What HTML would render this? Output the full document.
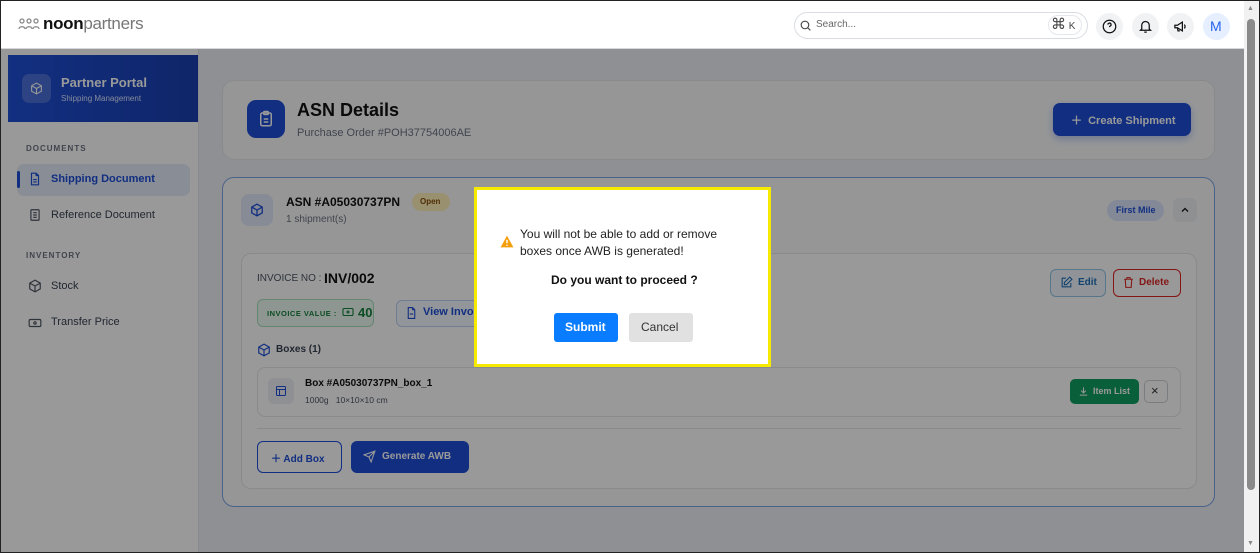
<!DOCTYPE html>
<html><head><style>
*{box-sizing:border-box;margin:0;padding:0}
body{width:1260px;height:553px;overflow:hidden;font-family:"Liberation Sans",sans-serif;background:#fff;position:relative}
.frame{position:absolute;left:0;top:0;width:1260px;height:553px;border:1px solid #222;z-index:50;pointer-events:none}
.hdr{position:absolute;left:1px;top:1px;width:1243px;height:48px;background:#fff;border-bottom:1px solid #d5d7db}
.abs{position:absolute}
.main{position:absolute;left:1px;top:49px;width:1243px;height:503px;background:#eef1f5}
.side{position:absolute;left:1px;top:49px;width:198px;height:503px;background:#fff;border-right:1px solid #e2e5ea}
.ov{position:absolute;left:1px;top:49px;width:1243px;height:503px;background:rgba(0,0,0,0.4)}
.card{position:absolute;background:#fafbfc;border:1px solid #e3e6ea;border-radius:12px}
.t{position:absolute;white-space:nowrap}
.scroll{position:absolute;left:1244px;top:1px;width:15px;height:551px;background:#f1f1f1}
svg{position:absolute}
</style></head><body>
<div class="main"></div>
<div class="side">
 <div class="abs" style="left:7px;top:6px;width:190px;height:67px;background:linear-gradient(90deg,#1e4fd6,#1b3fb0)"></div>
 <div class="abs" style="left:21px;top:25px;width:29px;height:29px;border-radius:7px;background:rgba(255,255,255,.2)"></div>
 <svg style="left:29px;top:33px" width="13" height="13" viewBox="0 0 24 24" fill="none" stroke="#fff" stroke-width="2"><path d="M12 2l9 5v10l-9 5-9-5V7z M3 7l9 5 9-5 M12 12v10"/></svg>
 <div class="t" style="left:60px;top:26px;color:#fff;font-weight:bold;font-size:13px">Partner Portal</div>
 <div class="t" style="left:60px;top:45px;color:#dbe4ff;font-size:8px">Shipping Management</div>
 <div class="t" style="left:25px;top:95px;color:#6b7280;font-size:8px;font-weight:bold;letter-spacing:1px">DOCUMENTS</div>
 <div class="abs" style="left:16px;top:115px;width:173px;height:32px;border-radius:7px;background:#e3ebfb"></div>
 <div class="abs" style="left:16px;top:122px;width:3px;height:17px;background:#1d4ed8;border-radius:2px"></div>
 <svg style="left:27px;top:123px" width="14" height="14" viewBox="0 0 24 24" fill="none" stroke="#1d4ed8" stroke-width="2"><path d="M14 2H6v20h12V6z M14 2v4h4 M9 13h6 M9 17h6"/></svg>
 <div class="t" style="left:50px;top:124px;color:#1d4ed8;font-weight:bold;font-size:11px">Shipping Document</div>
 <svg style="left:27px;top:159px" width="14" height="14" viewBox="0 0 24 24" fill="none" stroke="#4b5563" stroke-width="2"><rect x="5" y="3" width="14" height="18" rx="1"/><path d="M9 8h6M9 12h6M9 16h6"/></svg>
 <div class="t" style="left:50px;top:160px;color:#374151;font-size:11px">Reference Document</div>
 <div class="t" style="left:25px;top:202px;color:#6b7280;font-size:8px;font-weight:bold;letter-spacing:1px">INVENTORY</div>
 <svg style="left:27px;top:230px" width="14" height="14" viewBox="0 0 24 24" fill="none" stroke="#4b5563" stroke-width="2"><path d="M12 2l9 5v10l-9 5-9-5V7z M3 7l9 5 9-5 M12 12v10"/></svg>
 <div class="t" style="left:50px;top:231px;color:#374151;font-size:11px">Stock</div>
 <svg style="left:27px;top:267px" width="14" height="14" viewBox="0 0 24 24" fill="none" stroke="#4b5563" stroke-width="2"><rect x="2" y="6" width="20" height="12" rx="2"/><circle cx="12" cy="12" r="2"/></svg>
 <div class="t" style="left:50px;top:267px;color:#374151;font-size:11px">Transfer Price</div>
</div>
<div class="card" style="left:222px;top:80px;width:993px;height:80px"></div>
<div class="abs" style="left:247px;top:100px;width:38px;height:38px;border-radius:9px;background:#1d4ed8"></div>
<svg style="left:257px;top:110px" width="18" height="18" viewBox="0 0 24 24" fill="none" stroke="#fff" stroke-width="2"><rect x="5" y="4" width="14" height="17" rx="2"/><rect x="9" y="2" width="6" height="4" rx="1"/><path d="M9 12h6M9 16h6"/></svg>
<div class="t" style="left:297px;top:100px;font-size:18px;font-weight:bold;color:#111">ASN Details</div>
<div class="t" style="left:297px;top:127px;font-size:11px;color:#6b7280">Purchase Order #POH37754006AE</div>
<div class="abs" style="left:1053px;top:103px;width:138px;height:33px;border-radius:7px;background:#1d4ed8;box-shadow:0 3px 8px rgba(29,78,216,.3)"></div>
<div class="t" style="left:1071px;top:112px;font-size:11px;font-weight:bold;color:#fff">＋&nbsp; Create Shipment</div>
<div class="card" style="left:222px;top:177px;width:993px;height:330px;border-color:#7aa3e6"></div>
<div class="abs" style="left:241px;top:194px;width:32px;height:32px;border-radius:8px;background:#dfe8f8"></div>
<svg style="left:250px;top:203px" width="14" height="14" viewBox="0 0 24 24" fill="none" stroke="#1d4ed8" stroke-width="2.2"><path d="M12 2l9 5v10l-9 5-9-5V7z M3 7l9 5 9-5 M12 12v10"/></svg>
<div class="t" style="left:286px;top:195px;font-size:12px;font-weight:bold;color:#111">ASN #A05030737PN</div>
<div class="t" style="left:286px;top:214px;font-size:10px;color:#6b7280">1 shipment(s)</div>
<div class="abs" style="left:412px;top:193px;width:38px;height:18px;border-radius:9px;background:#fdf1b8"></div>
<div class="t" style="left:420px;top:197px;font-size:8px;font-weight:bold;color:#854d0e">Open</div>
<div class="abs" style="left:1107px;top:200px;width:57px;height:21px;border-radius:11px;background:#dbe5fb"></div>
<div class="t" style="left:1116px;top:205px;font-size:9px;font-weight:bold;color:#1d4ed8">First Mile</div>
<div class="abs" style="left:1173px;top:198px;width:24px;height:24px;border-radius:6px;background:#eef0f3"></div>
<svg style="left:1179px;top:204px" width="12" height="12" viewBox="0 0 24 24" fill="none" stroke="#111" stroke-width="2.5"><path d="M6 15l6-6 6 6"/></svg>
<div class="card" style="left:241px;top:253px;width:956px;height:236px;background:#fff;border-radius:10px"></div>
<div class="t" style="left:257px;top:273px;font-size:10px;color:#4b5563">INVOICE NO :</div>
<div class="t" style="left:324px;top:270px;font-size:14px;font-weight:bold;color:#111">INV/002</div>
<div class="abs" style="left:1050px;top:269px;width:56px;height:28px;border-radius:6px;border:1px solid #93c5e8;background:#f0f7fd"></div>
<svg style="left:1060px;top:276px" width="13" height="13" viewBox="0 0 24 24" fill="none" stroke="#1e6fb8" stroke-width="2"><path d="M11 4H4v16h16v-7 M18 2l4 4-10 10H8v-4z"/></svg>
<div class="t" style="left:1078px;top:277px;font-size:10px;font-weight:bold;color:#1e6fb8">Edit</div>
<div class="abs" style="left:1113px;top:269px;width:68px;height:28px;border-radius:6px;border:1.5px solid #dc2626;background:#fff"></div>
<svg style="left:1122px;top:276px" width="13" height="13" viewBox="0 0 24 24" fill="none" stroke="#dc2626" stroke-width="2"><path d="M4 6h16 M9 6V3h6v3 M6 6l1 15h10l1-15"/></svg>
<div class="t" style="left:1139px;top:277px;font-size:10px;font-weight:bold;color:#dc2626">Delete</div>
<div class="abs" style="left:257px;top:299px;width:117px;height:28px;border-radius:6px;border:1px solid #a7e0bd;background:#ecfbf2"></div>
<div class="t" style="left:267px;top:309px;font-size:7.5px;font-weight:bold;color:#15803d;letter-spacing:.5px">INVOICE VALUE :</div>
<svg style="left:342px;top:307px" width="12" height="10" viewBox="0 0 24 20" fill="none" stroke="#15803d" stroke-width="2.2"><rect x="2" y="3" width="20" height="14" rx="2"/><circle cx="12" cy="10" r="2"/></svg>
<div class="t" style="left:358px;top:305px;font-size:13px;font-weight:bold;color:#15803d">40</div>
<div class="abs" style="left:396px;top:300px;width:100px;height:27px;border-radius:6px;border:1px solid #bcd0f3;background:#f4f8ff"></div>
<svg style="left:405px;top:306px" width="13" height="14" viewBox="0 0 24 24" fill="none" stroke="#1d4ed8" stroke-width="2"><path d="M14 2H6v20h12V6z M14 2v4h4 M9 14h6"/></svg>
<div class="t" style="left:423px;top:306px;font-size:11px;font-weight:bold;color:#1d4ed8">View Invoice</div>
<svg style="left:257px;top:343px" width="14" height="14" viewBox="0 0 24 24" fill="none" stroke="#1d4ed8" stroke-width="2"><path d="M12 2l9 5v10l-9 5-9-5V7z M3 7l9 5 9-5 M12 12v10"/></svg>
<div class="t" style="left:276px;top:344px;font-size:10px;font-weight:bold;color:#374151">Boxes (1)</div>
<div class="card" style="left:257px;top:367px;width:924px;height:50px;background:#fff;border-radius:8px"></div>
<div class="abs" style="left:268px;top:378px;width:26px;height:26px;border-radius:6px;background:#eef1f5"></div>
<svg style="left:275px;top:385px" width="12" height="12" viewBox="0 0 24 24" fill="none" stroke="#1d4ed8" stroke-width="2"><rect x="3" y="3" width="18" height="18" rx="2"/><path d="M3 9h18M9 9v12"/></svg>
<div class="t" style="left:305px;top:378px;font-size:10px;font-weight:bold;color:#111">Box #A05030737PN_box_1</div>
<div class="t" style="left:305px;top:395px;font-size:8.5px;color:#4b5563">1000g &nbsp; 10×10×10 cm</div>
<div class="abs" style="left:1070px;top:379px;width:69px;height:25px;border-radius:5px;background:#0f9f5f"></div>
<svg style="left:1078px;top:386px" width="11" height="11" viewBox="0 0 24 24" fill="none" stroke="#fff" stroke-width="2.2"><path d="M12 3v12 M7 10l5 5 5-5 M4 20h16"/></svg>
<div class="t" style="left:1093px;top:386px;font-size:9px;font-weight:bold;color:#fff">Item List</div>
<div class="abs" style="left:1144px;top:380px;width:24px;height:23px;border-radius:5px;border:1px solid #cbd0d6;background:#fff"></div>
<div class="t" style="left:1151px;top:383px;font-size:13px;color:#333">×</div>
<div class="abs" style="left:257px;top:428px;width:924px;height:1px;background:#e3e6ea"></div>
<div class="abs" style="left:257px;top:441px;width:85px;height:32px;border-radius:6px;border:1.5px solid #1d4ed8;background:#fff"></div>
<div class="t" style="left:271px;top:450px;font-size:10px;font-weight:bold;color:#1d4ed8">＋ Add Box</div>
<div class="abs" style="left:351px;top:441px;width:118px;height:32px;border-radius:6px;background:#1d4ed8"></div>
<svg style="left:363px;top:450px" width="13" height="13" viewBox="0 0 24 24" fill="none" stroke="#fff" stroke-width="2"><path d="M22 2L11 13 M22 2l-7 20-4-9-9-4z"/></svg>
<div class="t" style="left:382px;top:451px;font-size:10px;font-weight:bold;color:#fff">Generate AWB</div>
<div class="ov"></div>
<div class="hdr">
 <svg style="left:17px;top:16px" width="22" height="14" viewBox="0 0 22 14" fill="none" stroke="#888" stroke-width="1.3"><circle cx="4" cy="4" r="2"/><circle cx="11" cy="4" r="2"/><circle cx="18" cy="4" r="2"/><path d="M1 12c0-3 6-3 6 0 M8 12c0-3 6-3 6 0 M15 12c0-3 6-3 6 0"/></svg>
 <div class="t" style="left:42px;top:13px;font-size:17px;font-weight:bold;color:#111;letter-spacing:-.3px">noon<span style="font-weight:normal;color:#777">partners</span></div>
 <div class="abs" style="left:793px;top:11px;width:294px;height:27px;border-radius:14px;border:1px solid #d9dce1"></div>
 <svg style="left:798px;top:18px" width="13" height="13" viewBox="0 0 24 24" fill="none" stroke="#444" stroke-width="2"><circle cx="11" cy="11" r="7"/><path d="M16 16l5 5"/></svg>
 <div class="t" style="left:815px;top:18px;font-size:10px;color:#666">Search...</div>
 <div class="abs" style="left:1047px;top:14px;width:34px;height:20px;border-radius:10px;border:1px solid #e5e7eb"></div>
 <div class="t" style="left:1050px;top:14px;font-size:15px;color:#444">⌘<span style="font-size:10px"> K</span></div>
 <div class="abs" style="left:1095px;top:12px;width:27px;height:27px;border-radius:50%;background:#f1f2f4"></div>
 <svg style="left:1101px;top:18px" width="15" height="15" viewBox="0 0 24 24" fill="none" stroke="#111" stroke-width="2"><circle cx="12" cy="12" r="10"/><path d="M9.5 9a2.5 2.5 0 1 1 3.5 2.3c-.7.4-1 1-1 1.7 M12 17h.01"/></svg>
 <div class="abs" style="left:1131px;top:12px;width:27px;height:27px;border-radius:50%;background:#f1f2f4"></div>
 <svg style="left:1137px;top:18px" width="15" height="15" viewBox="0 0 24 24" fill="none" stroke="#111" stroke-width="2"><path d="M6 16V10a6 6 0 0 1 12 0v6l2 2H4z M10 21h4"/></svg>
 <div class="abs" style="left:1166px;top:12px;width:27px;height:27px;border-radius:50%;background:#f1f2f4"></div>
 <svg style="left:1172px;top:18px" width="15" height="15" viewBox="0 0 24 24" fill="none" stroke="#111" stroke-width="2"><path d="M3 10v4h4l8 5V5L7 10z M18 9a4 4 0 0 1 0 6 M7 14l1 5h3"/></svg>
 <div class="abs" style="left:1202px;top:12px;width:27px;height:27px;border-radius:50%;background:#e6efff"></div>
 <div class="t" style="left:1209px;top:17px;font-size:14px;color:#2563eb">M</div>
</div>
<div class="scroll"></div>
<div class="t" style="left:1247px;top:5px;font-size:7px;color:#888">▲</div>
<div class="t" style="left:1247px;top:540px;font-size:7px;color:#888">▼</div>
<div class="abs" style="left:1247px;top:19px;width:8px;height:471px;border-radius:4px;background:#8a8a8a"></div>
<div class="abs" style="left:474px;top:187px;width:297px;height:180px;background:#fff;border:3px solid #f5ea00"></div>
<svg style="left:500px;top:235px" width="14" height="13" viewBox="0 0 24 22"><path d="M12 1L23 21H1z" fill="#f59e0b"/><path d="M12 8v6M12 16.5v2" stroke="#fff" stroke-width="2.5"/></svg>
<div class="t" style="left:520px;top:226px;font-size:12px;color:#222;line-height:17px">You will not be able to add or remove<br>boxes once AWB is generated!</div>
<div class="t" style="left:551px;top:273px;font-size:12px;font-weight:bold;color:#111">Do you want to proceed ?</div>
<div class="abs" style="left:554px;top:313px;width:64px;height:29px;border-radius:3px;background:#0a7cff"></div>
<div class="t" style="left:565px;top:320px;font-size:12px;font-weight:bold;color:#fff">Submit</div>
<div class="abs" style="left:629px;top:313px;width:64px;height:29px;border-radius:3px;background:#e1e1e1"></div>
<div class="t" style="left:641px;top:320px;font-size:12px;color:#333">Cancel</div>
<div class="frame"></div>
</body></html>
